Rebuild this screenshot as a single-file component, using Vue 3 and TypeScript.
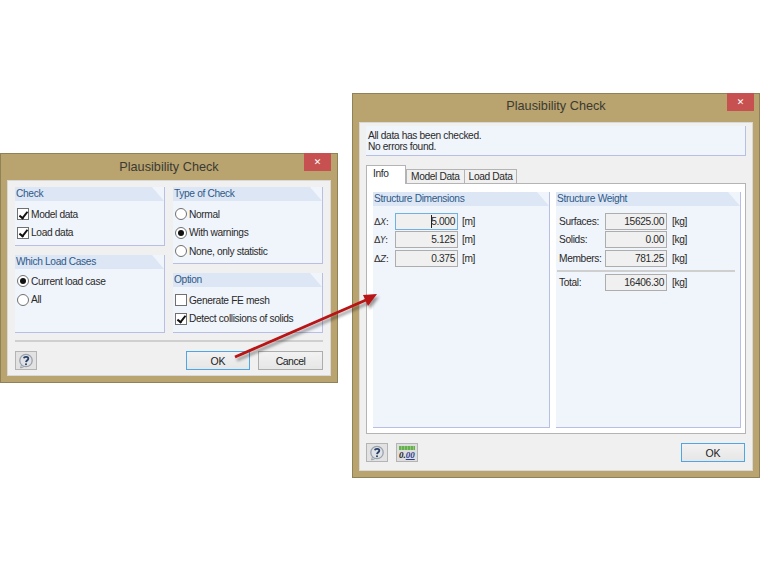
<script setup lang="ts">
// Two dialog windows on a white canvas, joined by a red callout arrow.
const dims = [
  { axis: 'X', value: '5.000', focused: true },
  { axis: 'Y', value: '5.125', focused: false },
  { axis: 'Z', value: '0.375', focused: false },
]
const weights = [
  { label: 'Surfaces:', value: '15625.00' },
  { label: 'Solids:', value: '0.00' },
  { label: 'Members:', value: '781.25' },
]
</script>

<template>
  <div class="canvas">
    <!-- small dialog -->
    <section class="win win-small">
      <header class="title">
        <span>Plausibility Check</span>
        <button type="button" class="close">✕</button>
      </header>
      <div class="client client-small">
        <div class="cols">
          <div class="col">
            <fieldset class="group g-check">
              <div class="group-head">Check</div>
              <div class="opts">
                <label class="opt"><span class="cb on"></span>Model data</label>
                <label class="opt"><span class="cb on"></span>Load data</label>
              </div>
            </fieldset>
            <fieldset class="group g-cases">
              <div class="group-head">Which Load Cases</div>
              <div class="opts">
                <label class="opt"><span class="rb on"></span>Current load case</label>
                <label class="opt"><span class="rb"></span>All</label>
              </div>
            </fieldset>
          </div>
          <div class="col">
            <fieldset class="group g-type">
              <div class="group-head">Type of Check</div>
              <div class="opts">
                <label class="opt"><span class="rb"></span>Normal</label>
                <label class="opt"><span class="rb on"></span>With warnings</label>
                <label class="opt"><span class="rb"></span>None, only statistic</label>
              </div>
            </fieldset>
            <fieldset class="group g-option">
              <div class="group-head">Option</div>
              <div class="opts">
                <label class="opt"><span class="cb"></span>Generate FE mesh</label>
                <label class="opt"><span class="cb on"></span>Detect collisions of solids</label>
              </div>
            </fieldset>
          </div>
        </div>
        <div class="sep"></div>
        <footer class="foot">
          <button type="button" class="icon-btn">
            <svg viewBox="0 0 16 16" width="16" height="16">
              <path d="M3.5 11.5 L2.6 15 L7 13.2" fill="#dfe3e8" stroke="#9aa1ab" />
              <circle cx="8" cy="7.5" r="6.2" fill="#dfe3e8" stroke="#9aa1ab" stroke-width="1.3" />
              <path d="M5.8 5.2 C6.2 3.4 10.4 3.4 10.3 5.6 C10.2 7.2 8.2 7.2 8 9.2" fill="none" stroke="#2b3f66" stroke-width="1.8" />
              <circle cx="8" cy="11.3" r="1" fill="#2b3f66" />
            </svg>
          </button>
          <div class="spring"></div>
          <button type="button" class="btn btn-default btn-ok">OK</button>
          <button type="button" class="btn btn-cancel">Cancel</button>
        </footer>
      </div>
    </section>

    <!-- result dialog -->
    <section class="win win-large">
      <header class="title">
        <span>Plausibility Check</span>
        <button type="button" class="close">✕</button>
      </header>
      <div class="client client-large">
        <div class="notice">All data has been checked.<br />No errors found.</div>
        <nav class="tabs">
          <span class="tab tab-active">Info</span>
          <span class="tab">Model Data</span>
          <span class="tab">Load Data</span>
        </nav>
        <div class="tab-body">
          <fieldset class="group g-dims">
            <div class="group-head">Structure Dimensions</div>
            <div class="rows">
              <div v-for="d in dims" :key="d.axis" class="row row-dim">
                <span class="delta">Δ<i>{{ d.axis }}</i>:</span>
                <span class="field f-dim" :class="{ 'field-focus': d.focused }">
                  <span v-if="d.focused" class="caret"></span>{{ d.value }}
                </span>
                <span class="unit">[m]</span>
              </div>
            </div>
          </fieldset>
          <fieldset class="group g-weight">
            <div class="group-head">Structure Weight</div>
            <div class="rows">
              <div v-for="w in weights" :key="w.label" class="row row-weight">
                <span class="wlabel">{{ w.label }}</span>
                <span class="field f-weight">{{ w.value }}</span>
                <span class="unit">[kg]</span>
              </div>
              <div class="rule"></div>
              <div class="row row-weight">
                <span class="wlabel">Total:</span>
                <span class="field f-weight">16406.30</span>
                <span class="unit">[kg]</span>
              </div>
            </div>
          </fieldset>
        </div>
        <footer class="foot foot-large">
          <button type="button" class="icon-btn">
            <svg viewBox="0 0 16 16" width="16" height="16">
              <path d="M3.5 11.5 L2.6 15 L7 13.2" fill="#dfe3e8" stroke="#9aa1ab" />
              <circle cx="8" cy="7.5" r="6.2" fill="#dfe3e8" stroke="#9aa1ab" stroke-width="1.3" />
              <path d="M5.8 5.2 C6.2 3.4 10.4 3.4 10.3 5.6 C10.2 7.2 8.2 7.2 8 9.2" fill="none" stroke="#2b3f66" stroke-width="1.8" />
              <circle cx="8" cy="11.3" r="1" fill="#2b3f66" />
            </svg>
          </button>
          <button type="button" class="icon-btn icon-num">
            <span class="ruler"></span>
            <span class="num">0.<u>00</u></span>
          </button>
          <div class="spring"></div>
          <button type="button" class="btn btn-default btn-ok-large">OK</button>
        </footer>
      </div>
    </section>

    <svg class="arrow" width="760" height="570" viewBox="0 0 760 570">
      <defs>
        <filter id="arrow-shadow" x="-10%" y="-10%" width="130%" height="130%">
          <feDropShadow dx="2" dy="3" stdDeviation="1.6" flood-color="#000" flood-opacity="0.4" />
        </filter>
      </defs>
      <g filter="url(#arrow-shadow)">
        <line x1="235" y1="357" x2="366" y2="300" stroke="#b81414" stroke-width="2.8" />
        <polygon points="377,294 363,295 368,306" fill="#b81414" />
      </g>
    </svg>
  </div>
</template>

<style>
html, body { margin: 0; background: #fff; }
</style>

<style scoped>
.canvas {
  position: relative;
  width: 760px;
  height: 570px;
  overflow: hidden;
  background: #fff;
  font-family: "Liberation Sans", Arial, sans-serif;
  font-size: 10.2px;
  letter-spacing: -0.35px;
  color: #2a2a2a;
}
.win {
  position: absolute;
  box-sizing: border-box;
  background: #b9a36f;
  border: 1px solid #8f8258;
  display: flex;
  flex-direction: column;
}
.win-small { left: 0; top: 153px; width: 338px; height: 230px; padding: 0 6px 6px; }
.win-large { left: 352px; top: 93px; width: 408px; height: 385px; padding: 0 6px 6px; }

.title {
  position: relative;
  height: 26px;
  flex: none;
  display: flex;
  align-items: center;
  justify-content: center;
  font-size: 12.7px;
  letter-spacing: 0;
  color: #3b3a33;
  box-sizing: border-box;
}
.win-large .title { height: 28px; padding-bottom: 4px; }
.close {
  position: absolute;
  top: -1px;
  right: 0;
  width: 27px;
  height: 18px;
  padding: 0;
  border: 0;
  background: #c75050;
  color: #fff;
  font-size: 9px;
  font-weight: 700;
  font-family: "DejaVu Sans", sans-serif;
}
.win-large .close { right: -1px; }

.client {
  flex: 1;
  min-height: 0;
  box-sizing: border-box;
  background: #f0f0f0;
  border: 1px solid #d8d8d8;
  display: flex;
  flex-direction: column;
}
.client > * { flex: none; }
.client-small { padding: 6px 7px 5px 7px; }
.client-large { padding: 3px 6px 8px 6px; }

.cols { display: flex; gap: 8px; }
.col { width: 150px; display: flex; flex-direction: column; gap: 9px; }

.group {
  margin: 0;
  padding: 0;
  min-width: 0;
  box-sizing: border-box;
  background: #f0f4fb;
  border: 0;
  border-right: 1px solid #b9bfe4;
  border-bottom: 1px solid #b9bfe4;
  position: relative;
}
.group-head {
  height: 14px;
  line-height: 14px;
  padding-left: 1px;
  color: #2f5a88;
  background: #dce6f5;
  clip-path: polygon(0 0, calc(100% - 12px) 0, 100% 100%, 0 100%);
}
.g-check { height: 59px; }
.g-cases { height: 78px; }
.g-type { height: 77px; }
.g-option { height: 60px; }

.opts { display: flex; flex-direction: column; padding: 4px 0 0 2px; }
.opt { display: flex; align-items: center; gap: 1px; height: 18.5px; white-space: nowrap; }
.g-cases .opts { padding-top: 3px; }

.cb, .rb {
  flex: none;
  box-sizing: border-box;
  width: 12px;
  height: 12px;
  background: #fff;
  border: 1px solid #707070;
  position: relative;
  margin-right: 1px;
}
.rb { border-radius: 50%; }
.rb.on::after {
  content: "";
  position: absolute;
  inset: 2px;
  border-radius: 50%;
  background: #111;
}
.cb.on::after {
  content: "";
  position: absolute;
  left: 3.2px;
  top: 0.6px;
  width: 3.4px;
  height: 7px;
  border: solid #111;
  border-width: 0 2px 2px 0;
  transform: rotate(38deg);
}

.sep { height: 2px; background: #cfcfcf; margin-top: 7px; }
.foot { display: flex; align-items: center; margin-top: 9px; gap: 8px; }
.spring { flex: 1; }
.icon-btn {
  box-sizing: border-box;
  width: 22px;
  height: 19px;
  padding: 0;
  background: #e2e2e2;
  border: 1px solid #b4b4b4;
  display: flex;
  align-items: center;
  justify-content: center;
  position: relative;
}
.btn {
  box-sizing: border-box;
  height: 19px;
  padding: 0;
  background: linear-gradient(#f2f2f2, #e6e6e6);
  border: 1px solid #adadad;
  font-family: inherit;
  font-size: 10.5px;
  color: #222;
}
.btn-default { border-color: #4ea6e6; }
.btn-ok { width: 64px; }
.btn-cancel { width: 65px; letter-spacing: -0.5px; }
.btn-ok-large { width: 64px; }

.notice {
  box-sizing: border-box;
  height: 30px;
  padding: 4px 2px 0;
  line-height: 11px;
  background: #f0f4fb;
  border-right: 1px solid #b9bfe4;
  border-bottom: 1px solid #b9bfe4;
}
.tabs {
  display: flex;
  align-items: flex-end;
  height: 18px;
  margin-top: 9px;
  position: relative;
  z-index: 1;
}
.tab {
  box-sizing: border-box;
  height: 14px;
  line-height: 13px;
  padding: 0 4px;
  background: #f0f0f0;
  border: 1px solid #b4b4b4;
  border-bottom: 0;
  margin-left: -1px;
  white-space: nowrap;
}
.tab:first-child { margin-left: 0; }
.tab-active {
  height: 19px;
  width: 40px;
  background: #fff;
  line-height: 16px;
  padding: 0 6px;
  margin-bottom: -1px;
  margin-right: 1px;
}
.tab-body {
  box-sizing: border-box;
  height: 251px;
  background: #fff;
  border: 1px solid #b4b4b4;
  padding: 8px 4px 5px 6px;
  display: flex;
  gap: 6px;
}
.g-dims { width: 177px; }
.g-weight { width: 185px; }
.rows { display: flex; flex-direction: column; padding-top: 6px; }
.row { display: flex; align-items: center; height: 18.5px; white-space: nowrap; }
.field {
  box-sizing: border-box;
  height: 17px;
  line-height: 15px;
  padding-right: 2px;
  text-align: right;
  background: #f0f0f0;
  border: 1px solid #adadad;
  position: relative;
}
.field-focus { border-color: #6fb1e2; }
.caret {
  position: absolute;
  left: 35px;
  top: 1px;
  width: 1px;
  height: 13px;
  background: #222;
}
.delta { width: 22px; padding-left: 1px; box-sizing: border-box; color: #333; font-family: "DejaVu Sans", sans-serif; font-size: 9.5px; }
.delta i { font-size: 8.5px; }
.f-dim { width: 63px; }
.unit { margin-left: 4px; }
.row-weight .unit { margin-left: 5px; }
.wlabel { width: 49px; padding-left: 3px; box-sizing: border-box; }
.f-weight { width: 62px; }
.rule { height: 2px; background: #cfcfcf; margin: 2px 5px 2px 1px; }

.foot-large { padding-right: 1px; }
.icon-num { background: #dedede; }
.ruler {
  position: absolute;
  left: 2px;
  top: 2px;
  width: 16px;
  height: 4px;
  background: repeating-linear-gradient(90deg, #67b04f 0 2px, #8cc876 2px 3px);
}
.num {
  position: absolute;
  left: 2px;
  bottom: 1px;
  font-family: "Liberation Serif", serif;
  font-style: italic;
  font-weight: 700;
  font-size: 9px;
  line-height: 10px;
  color: #1a1a1a;
}
.num u { color: #2c3f8f; }

.arrow { position: absolute; left: 0; top: 0; pointer-events: none; }
</style>
